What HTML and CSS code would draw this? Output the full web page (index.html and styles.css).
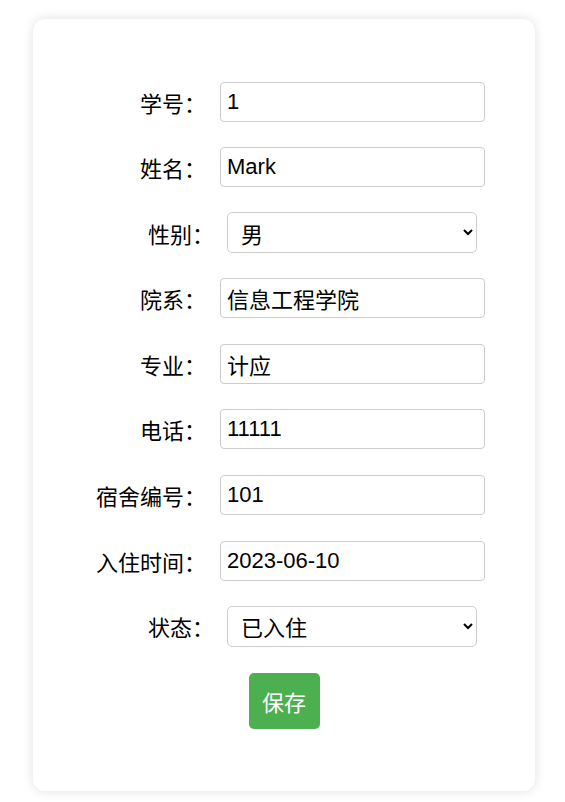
FILE: index.html
```html
<!DOCTYPE html>
<html lang="zh">
<head>
<meta charset="utf-8">
<title>编辑学生信息</title>
<link rel="stylesheet" href="styles.css">
</head>
<body>
<form class="card">
  <div class="row"><label class="label">学号：</label><input class="field" type="text" value="1"></div>
  <div class="row"><label class="label">姓名：</label><input class="field" type="text" value="Mark"></div>
  <div class="row"><label class="label">性别：</label><select class="choice"><option>男</option><option>女</option></select></div>
  <div class="row"><label class="label">院系：</label><input class="field" type="text" value="信息工程学院"></div>
  <div class="row"><label class="label">专业：</label><input class="field" type="text" value="计应"></div>
  <div class="row"><label class="label">电话：</label><input class="field" type="text" value="11111"></div>
  <div class="row"><label class="label">宿舍编号：</label><input class="field" type="text" value="101"></div>
  <div class="row"><label class="label">入住时间：</label><input class="field" type="text" value="2023-06-10"></div>
  <div class="row"><label class="label">状态：</label><select class="choice"><option>已入住</option><option>未入住</option></select></div>
  <div class="actions"><button class="save" type="button">保存</button></div>
</form>
</body>
</html>
```
FILE: styles.css
```css
html, body {
  margin: 0;
  padding: 0;
  background: #ffffff;
}
body {
  font-family: "Noto Sans CJK SC", "Liberation Sans", sans-serif;
  color: #000;
}
.card {
  box-sizing: border-box;
  width: 502px;
  margin: 19px 0 12px 33px;
  padding: 62px 0 62px;
  background: #fff;
  border-radius: 12px;
  box-shadow: 0 0 12px rgba(0, 0, 0, 0.12);
  display: flex;
  flex-direction: column;
  gap: 24.6px;
}
.row {
  display: flex;
  justify-content: center;
  align-items: center;
  gap: 14px;
  height: 41px;
}
.label {
  width: 123px;
  text-align: right;
  font-size: 22px;
  line-height: 28px;
  color: #000;
  white-space: nowrap;
}
.field {
  box-sizing: border-box;
  width: 265px;
  height: 40px;
  margin: 0;
  padding: 0 6px;
  border: 1px solid #cccccc;
  border-radius: 4px;
  font-family: "Liberation Sans", "Noto Sans CJK SC", sans-serif;
  font-size: 22px;
  color: #000;
  background: #fff;
  outline: none;
}
.choice {
  box-sizing: border-box;
  width: 250px;
  height: 41px;
  margin: 0 0 0 -1px;
  padding: 0 8px 0 9px;
  border: 1px solid #cccccc;
  border-radius: 5px;
  font-family: "Noto Sans CJK SC", "Liberation Sans", sans-serif;
  font-size: 22px;
  color: #000;
  background-color: #fff;
}
.actions {
  display: flex;
  justify-content: center;
  margin-top: 1.4px;
}
.save {
  box-sizing: border-box;
  width: 71px;
  height: 56px;
  padding: 0;
  border: none;
  border-radius: 5px;
  background: #4caf50;
  color: #fff;
  font-family: "Noto Sans CJK SC", sans-serif;
  font-size: 22px;
  cursor: pointer;
}
```
